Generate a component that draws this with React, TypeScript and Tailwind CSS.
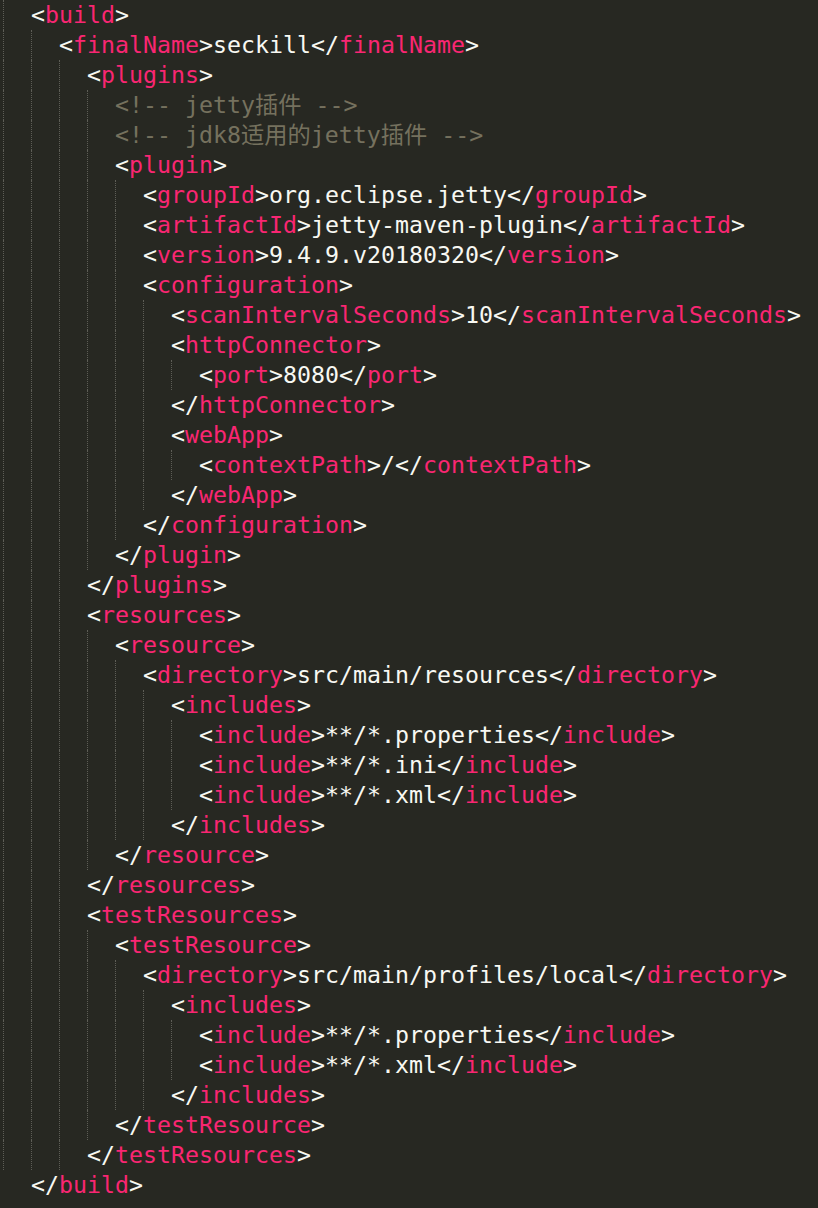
import React from "react";

type Line = { level: number; text: string; comment?: boolean; noGuide?: boolean };

const lines: Line[] = [
  { level: 1, text: "<build>" },
  { level: 2, text: "<finalName>seckill</finalName>" },
  { level: 3, text: "<plugins>" },
  { level: 4, text: "<!-- jetty插件 -->", comment: true },
  { level: 4, text: "<!-- jdk8适用的jetty插件 -->", comment: true },
  { level: 4, text: "<plugin>" },
  { level: 5, text: "<groupId>org.eclipse.jetty</groupId>" },
  { level: 5, text: "<artifactId>jetty-maven-plugin</artifactId>" },
  { level: 5, text: "<version>9.4.9.v20180320</version>" },
  { level: 5, text: "<configuration>" },
  { level: 6, text: "<scanIntervalSeconds>10</scanIntervalSeconds>" },
  { level: 6, text: "<httpConnector>" },
  { level: 7, text: "<port>8080</port>" },
  { level: 6, text: "</httpConnector>" },
  { level: 6, text: "<webApp>" },
  { level: 7, text: "<contextPath>/</contextPath>" },
  { level: 6, text: "</webApp>" },
  { level: 5, text: "</configuration>" },
  { level: 4, text: "</plugin>" },
  { level: 3, text: "</plugins>" },
  { level: 3, text: "<resources>" },
  { level: 4, text: "<resource>" },
  { level: 5, text: "<directory>src/main/resources</directory>" },
  { level: 6, text: "<includes>" },
  { level: 7, text: "<include>**/*.properties</include>" },
  { level: 7, text: "<include>**/*.ini</include>" },
  { level: 7, text: "<include>**/*.xml</include>" },
  { level: 6, text: "</includes>" },
  { level: 4, text: "</resource>" },
  { level: 3, text: "</resources>" },
  { level: 3, text: "<testResources>" },
  { level: 4, text: "<testResource>" },
  { level: 5, text: "<directory>src/main/profiles/local</directory>" },
  { level: 6, text: "<includes>" },
  { level: 7, text: "<include>**/*.properties</include>" },
  { level: 7, text: "<include>**/*.xml</include>" },
  { level: 6, text: "</includes>" },
  { level: 4, text: "</testResource>" },
  { level: 3, text: "</testResources>" },
  { level: 1, text: "</build>", noGuide: true },
];

function renderXml(text: string) {
  const out: React.ReactNode[] = [];
  const re = /(<\/?)(\w+)(>)|([^<]+)/g;
  let m: RegExpExecArray | null;
  let i = 0;
  while ((m = re.exec(text))) {
    if (m[2]) {
      out.push(<span key={i++} className="text-[#f8f8f2]">{m[1]}</span>);
      out.push(<span key={i++} className="text-[#f92672]">{m[2]}</span>);
      out.push(<span key={i++} className="text-[#f8f8f2]">{m[3]}</span>);
    } else {
      out.push(<span key={i++} className="text-[#f8f8f2]">{m[4]}</span>);
    }
  }
  return out;
}

export default function App() {
  return (
    <div
      className="w-[818px] h-[1208px] bg-[#272822] pl-[3px] overflow-hidden text-[23.25px] leading-[30px]"
      style={{ fontFamily: '"DejaVu Sans Mono", "Noto Sans CJK SC", monospace' }}
    >
      {lines.map((ln, idx) => (
        <div key={idx} className="flex h-[30px] whitespace-pre">
          {Array.from({ length: ln.level }).map((_, k) => (
            <span
              key={k}
              className={
                ln.noGuide
                  ? "w-[28px] h-full shrink-0"
                  : "w-[28px] h-full shrink-0 border-l border-dotted border-[#5e5e57]"
              }
            />
          ))}
          <span>
            {ln.comment ? (
              <span className="text-[#75715e]">{ln.text}</span>
            ) : (
              renderXml(ln.text)
            )}
          </span>
        </div>
      ))}
    </div>
  );
}
